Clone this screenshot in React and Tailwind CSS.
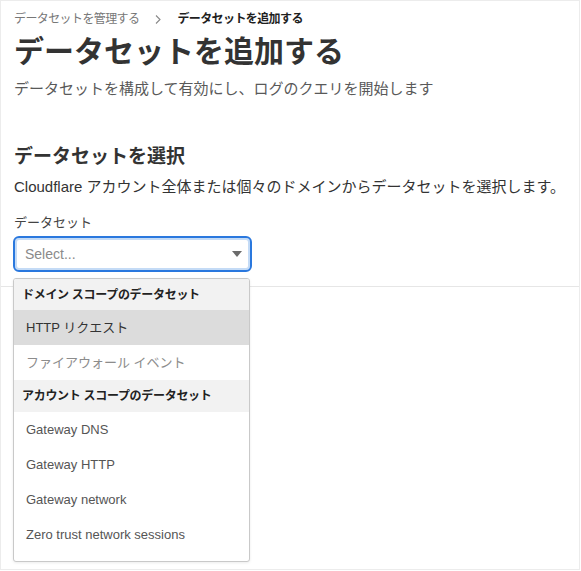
const font = { fontFamily: '"Liberation Sans", "Noto Sans CJK JP", sans-serif' };

const domainSets = [
  { label: 'HTTP リクエスト', state: 'hover' },
  { label: 'ファイアウォール イベント', state: 'disabled' },
];

const accountSets = ['Gateway DNS', 'Gateway HTTP', 'Gateway network', 'Zero trust network sessions'];

function GroupHeader({ children }) {
  return (
    <div className="h-[32px] flex items-center px-[8px] bg-[#f2f2f2] text-[12px] font-bold text-[#222] tracking-[-0.3px]">
      {children}
    </div>
  );
}

function Option({ label, state }) {
  const cls =
    state === 'hover'
      ? 'bg-[#dcdcdc] text-[#333]'
      : state === 'disabled'
      ? 'bg-white text-[#8c8c8c]'
      : 'bg-white text-[#555]';
  return <div className={`h-[35px] flex items-center px-[12px] text-[13px] ${cls}`}>{label}</div>;
}

export default function App() {
  return (
    <div className="w-[580px] h-[570px] bg-white border border-[#ececec] overflow-hidden" style={font}>
      <div className="px-[13px] pt-[10px]">
        {/* Breadcrumb */}
        <div className="flex items-center h-[16px] text-[12px] tracking-[-0.6px]">
          <span className="text-[#777]">データセットを管理する</span>
          <svg className="mx-[16px]" width="6" height="9" viewBox="0 0 6 9">
            <path d="M1 0.5 L5 4.5 L1 8.5" fill="none" stroke="#888" strokeWidth="1.1" />
          </svg>
          <span className="text-[#1f1f1f] font-bold">データセットを追加する</span>
        </div>

        <h1 className="mt-[7px] text-[30px] leading-[36px] font-semibold text-[#333]">データセットを追加する</h1>
        <p className="mt-[8px] text-[15px] leading-[22px] text-[#595959]">
          データセットを構成して有効にし、ログのクエリを開始します
        </p>

        <h2 className="mt-[44px] text-[19px] leading-[26px] font-bold text-[#333]">データセットを選択</h2>
        <p className="mt-[6px] text-[15px] leading-[22px] text-[#333]">
          Cloudflare アカウント全体または個々のドメインからデータセットを選択します。
        </p>

        <div className="mt-[16px] text-[13px] leading-[18px] text-[#444]">データセット</div>

        <div className="relative mt-[4px] -ml-[1px] w-[239px]">
          <div className="h-[36px] rounded-[6px] border-2 border-[#2a78de] shadow-[inset_0_0_0_2px_#c4dbf6] flex items-center justify-between pl-[10px] pr-[8px]">
            <span className="text-[14px] text-[#8a8a8a]">Select...</span>
            <svg width="10" height="6" viewBox="0 0 10 6">
              <path d="M0 0 L10 0 L5 6 Z" fill="#6b6b6b" />
            </svg>
          </div>

          {/* Menu */}
          <div className="absolute left-0 top-[42px] w-[237px] h-[284px] z-10 bg-white border border-[#c9c9c9] rounded-[3px] shadow-[0_1px_3px_rgba(0,0,0,0.08)] overflow-hidden">
            <GroupHeader>ドメイン スコープのデータセット</GroupHeader>
            <div className="-mt-[1px]">
              {domainSets.map((o) => (
                <Option key={o.label} label={o.label} state={o.state} />
              ))}
            </div>
            <GroupHeader>アカウント スコープのデータセット</GroupHeader>
            {accountSets.map((o) => (
              <Option key={o} label={o} />
            ))}
          </div>
        </div>
      </div>

      <div className="mt-[14px] h-px bg-[#e6e6e6]" />
    </div>
  );
}
